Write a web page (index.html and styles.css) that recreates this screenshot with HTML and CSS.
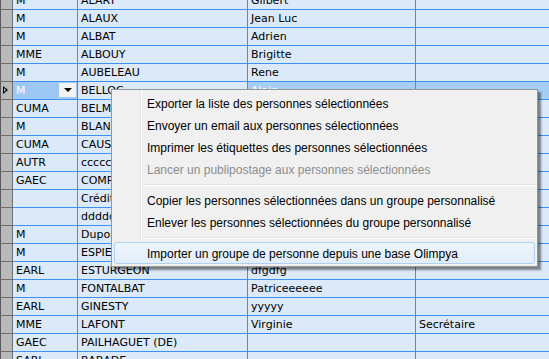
FILE: index.html
```html
<!DOCTYPE html>
<html lang="fr">
<head>
    <meta charset="UTF-8">
    <title>Personnes</title>
    <link rel="stylesheet" href="styles.css">
</head>
<body>
    <div class="grid-wrap">
        <table class="grid">
            <tr><td class="rh"></td><td>M</td><td>ALARY</td><td>Gilbert</td><td></td></tr>
            <tr><td class="rh"></td><td>M</td><td>ALAUX</td><td>Jean Luc</td><td></td></tr>
            <tr><td class="rh"></td><td>M</td><td>ALBAT</td><td>Adrien</td><td></td></tr>
            <tr><td class="rh"></td><td>MME</td><td>ALBOUY</td><td>Brigitte</td><td></td></tr>
            <tr><td class="rh"></td><td>M</td><td>AUBELEAU</td><td>Rene</td><td></td></tr>
            <tr class="current">
                <td class="rh"><span class="marker"></span></td>
                <td class="combo"><span>M</span><span class="drop"></span></td>
                <td class="focus">BELLOC</td>
                <td>Alain</td>
                <td></td>
            </tr>
            <tr><td class="rh"></td><td>CUMA</td><td>BELMONT</td><td></td><td></td></tr>
            <tr><td class="rh"></td><td>M</td><td>BLANC</td><td></td><td></td></tr>
            <tr><td class="rh"></td><td>CUMA</td><td>CAUSSE</td><td></td><td></td></tr>
            <tr><td class="rh"></td><td>AUTR</td><td>cccccccc</td><td></td><td></td></tr>
            <tr><td class="rh"></td><td>GAEC</td><td>COMPS</td><td></td><td></td></tr>
            <tr><td class="rh"></td><td></td><td>Crédit</td><td></td><td></td></tr>
            <tr><td class="rh"></td><td></td><td>ddddd</td><td></td><td></td></tr>
            <tr><td class="rh"></td><td>M</td><td>Dupont</td><td></td><td></td></tr>
            <tr><td class="rh"></td><td>M</td><td>ESPIE</td><td></td><td></td></tr>
            <tr><td class="rh"></td><td>EARL</td><td>ESTURGEON</td><td>dfgdfg</td><td></td></tr>
            <tr><td class="rh"></td><td>M</td><td>FONTALBAT</td><td>Patriceeeeee</td><td></td></tr>
            <tr><td class="rh"></td><td>EARL</td><td>GINESTY</td><td>yyyyy</td><td></td></tr>
            <tr><td class="rh"></td><td>MME</td><td>LAFONT</td><td>Virginie</td><td>Secrétaire</td></tr>
            <tr><td class="rh"></td><td>GAEC</td><td>PAILHAGUET (DE)</td><td></td><td></td></tr>
            <tr><td class="rh"></td><td>SARL</td><td>RABADE</td><td></td><td></td></tr>
        </table>

        <ul class="menu">
            <li>Exporter la liste des personnes sélectionnées</li>
            <li>Envoyer un email aux personnes sélectionnées</li>
            <li>Imprimer les étiquettes des personnes sélectionnées</li>
            <li class="disabled">Lancer un publipostage aux personnes sélectionnées</li>
            <li class="sep"></li>
            <li>Copier les personnes sélectionnées dans un groupe personnalisé</li>
            <li>Enlever les personnes sélectionnées du groupe personnalisé</li>
            <li class="sep"></li>
            <li class="hover">Importer un groupe de personne depuis une base Olimpya</li>
        </ul>
    </div>
</body>
</html>
```

FILE: styles.css
```css
html, body {
    margin: 0;
    padding: 0;
    overflow: hidden;
    background: #dbe9f8;
}
.grid-wrap {
    position: relative;
    width: 549px;
    height: 359px;
    overflow: hidden;
}
.grid {
    border-collapse: collapse;
    table-layout: fixed;
    width: 600px;
    margin-top: -9px;
    font-family: Tahoma, "DejaVu Sans", sans-serif;
    font-size: 11px;
    color: #000;
}
.grid td {
    height: 17px;
    padding: 0 3px;
    border: 1px solid #3b92f3;
    background: #dbe9f8;
    white-space: nowrap;
    overflow: hidden;
    box-sizing: border-box;
    line-height: 17px;
}
.grid td:nth-child(1) { width: 12px; }
.grid td:nth-child(2) { width: 65px; }
.grid td:nth-child(3) { width: 170px; }
.grid td:nth-child(4) { width: 168px; }
.grid td.rh {
    background: #b9b9b9;
    border: 1px solid #6e6e6e;
    border-left: 1px solid #5a5a5a;
    padding: 0;
    position: relative;
}
.current td {
    color: #fff;
    background: #a6cdf4;
    border-top: 1px dotted #000;
    border-bottom: 1px dotted #000;
}
.current td.focus {
    color: #000;
    background: #dbe9f8;
}
.current td.combo {
    background: #9cc8f3;
    padding-right: 0;
}
.combo {
    position: relative;
}
.drop {
    position: absolute;
    right: 1px;
    top: 1px;
    width: 17px;
    height: 14px;
    background: #f4f4f4;
}
.drop::after {
    content: "";
    position: absolute;
    left: 5px;
    top: 5px;
    border-left: 4px solid transparent;
    border-right: 4px solid transparent;
    border-top: 4px solid #000;
}
.marker {
    position: absolute;
    left: 2px;
    top: 4px;
    width: 0;
    height: 0;
    border-top: 4px solid transparent;
    border-bottom: 4px solid transparent;
    border-left: 5px solid #000;
}
.marker::after {
    content: "";
    position: absolute;
    left: -4px;
    top: -2px;
    border-top: 2px solid transparent;
    border-bottom: 2px solid transparent;
    border-left: 2px solid #b9b9b9;
}

.menu {
    position: absolute;
    left: 111px;
    top: 89px;
    width: 421px;
    margin: 0;
    padding: 2px;
    list-style: none;
    background: #f0f0f0;
    border: 1px solid #979797;
    box-shadow: 3px 3px 2px rgba(0, 0, 0, 0.45);
    font-family: "Liberation Sans", Arial, sans-serif;
    font-size: 12px;
    color: #000;
    background-image: linear-gradient(to right, transparent 28px, #e2e3e3 28px, #e2e3e3 29px, #fff 29px, #fff 30px, transparent 30px);
}
.menu li {
    height: 22px;
    line-height: 22px;
    padding-left: 32px;
    border: 1px solid transparent;
    box-sizing: border-box;
    white-space: nowrap;
}
.menu li.disabled {
    color: #8d8d8d;
}
.menu li.sep {
    height: 9px;
    margin-left: 29px;
    padding: 0;
    border: none;
    background: linear-gradient(to bottom, transparent 4px, #e0e0e0 4px, #e0e0e0 5px, #fff 5px, #fff 6px, transparent 6px);
}
.menu li.sep:last-of-type {
    height: 7px;
}
.menu li.hover {
    border: 1px solid #aed0f2;
    border-radius: 3px;
    background: linear-gradient(to bottom, #eef5fc, #e2edf9);
}
```
